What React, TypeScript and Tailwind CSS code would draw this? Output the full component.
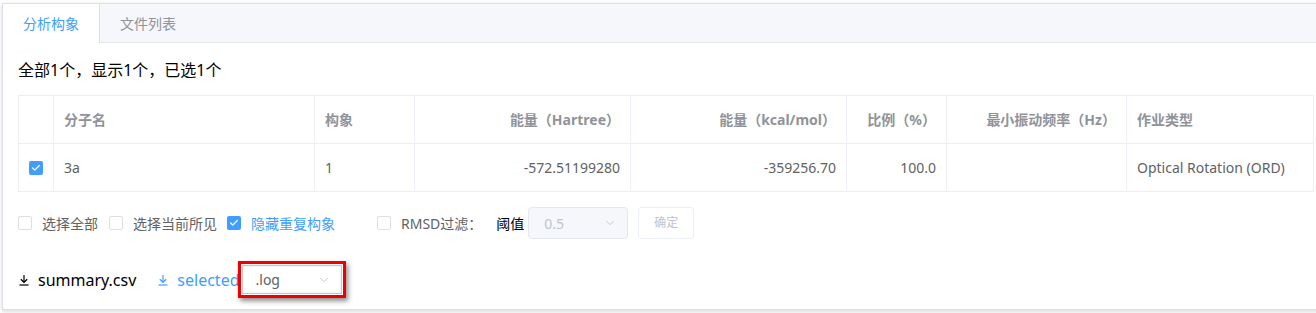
import { Check, ChevronDown } from "lucide-react"

const font = "font-['Noto_Sans','Noto_Sans_CJK_SC',sans-serif]"

function DownloadIcon({ className }: { className?: string }) {
  return (
    <svg viewBox="0 0 12 12" className={className} fill="none" stroke="currentColor" strokeWidth="1.2">
      <path d="M6 1v7" />
      <path d="M2.8 5.2L6 8.3l3.2-3.1" />
      <path d="M1.5 11h9" />
    </svg>
  )
}

function Box({ checked }: { checked?: boolean }) {
  return checked ? (
    <span className="flex h-[14px] w-[14px] items-center justify-center rounded-[2px] bg-[#409eff]">
      <Check className="h-[10px] w-[10px] text-white" strokeWidth={3} />
    </span>
  ) : (
    <span className="block h-[14px] w-[14px] rounded-[2px] border border-[#dcdfe6] bg-white" />
  )
}

const columns = [
  { title: "分子名", width: 261, align: "left" },
  { title: "构象", width: 100, align: "left" },
  { title: "能量（Hartree）", width: 216, align: "right" },
  { title: "能量（kcal/mol）", width: 216, align: "right" },
  { title: "比例（%）", width: 100, align: "right" },
  { title: "最小振动频率（Hz）", width: 180, align: "right" },
  { title: "作业类型", width: 187, align: "left" },
]

const row = ["3a", "1", "-572.51199280", "-359256.70", "100.0", "", "Optical Rotation (ORD)"]

export default function App() {
  return (
    <div className={`h-[313px] w-[1316px] overflow-hidden bg-white ${font}`}>
      <div className="ml-[2px] mt-[3px] w-[1328px] border border-[#dcdfe6] bg-white shadow-[0_2px_4px_rgba(0,0,0,0.12),0_0_6px_rgba(0,0,0,0.04)]">
        {/* Tabs */}
        <div className="flex h-[39px] border-b border-[#e4e7ed] bg-[#f5f7fa]">
          <div className="-mb-px flex h-[39px] items-center border-r border-[#dcdfe6] bg-white px-5 text-[14px] text-[#409eff]">
            分析构象
          </div>
          <div className="flex items-center px-5 text-[14px] text-[#909399]">文件列表</div>
        </div>

        <div className="px-[15px] pb-[11px] pt-[15px]">
          <div className="h-[24px] text-[16px] leading-[24px] text-black">全部1个，显示1个，已选1个</div>

          {/* Table */}
          <table className="mt-[13px] w-[1296px] table-fixed border-collapse text-[14px]">
            <colgroup>
              <col className="w-[35px]" />
              {columns.map((c) => (
                <col key={c.title} style={{ width: c.width }} />
              ))}
            </colgroup>
            <thead>
              <tr className="h-[48px]">
                <th className="border border-[#ebeef5]" />
                {columns.map((c) => (
                  <th
                    key={c.title}
                    className={`border border-[#ebeef5] px-[10px] font-bold text-[#909399] ${
                      c.align === "right" ? "text-right" : "text-left"
                    }`}
                  >
                    {c.title}
                  </th>
                ))}
              </tr>
            </thead>
            <tbody>
              <tr className="h-[48px]">
                <td className="border border-[#ebeef5] pl-[10px]">
                  <Box checked />
                </td>
                {row.map((v, i) => (
                  <td
                    key={i}
                    className={`border border-[#ebeef5] px-[10px] text-[#606266] ${
                      columns[i].align === "right" ? "text-right" : "text-left"
                    }`}
                  >
                    {v}
                  </td>
                ))}
              </tr>
            </tbody>
          </table>

          {/* Filter controls */}
          <div className="mt-[15px] flex h-[32px] items-center text-[14px] text-[#606266]">
            <Box />
            <span className="ml-[10px]">选择全部</span>
            <span className="ml-[11px]">
              <Box />
            </span>
            <span className="ml-[10px]">选择当前所见</span>
            <span className="ml-[10px]">
              <Box checked />
            </span>
            <span className="ml-[10px] text-[#409eff]">隐藏重复构象</span>
            <span className="ml-[42px]">
              <Box />
            </span>
            <span className="ml-[10px]">RMSD过滤：</span>
            <span className="ml-[14px] text-black">阈值</span>
            <div className="ml-[4px] flex h-[32px] w-[100px] items-center justify-between rounded-[4px] border border-[#e4e7ed] bg-[#f5f7fa] pl-[15px] pr-[10px] text-[#c0c4cc]">
              <span>0.5</span>
              <ChevronDown className="h-[14px] w-[14px]" strokeWidth={1.5} />
            </div>
            <button className="ml-[10px] h-[32px] w-[56px] rounded-[3px] border border-[#ebeef5] bg-white text-[12px] text-[#c0c4cc]">
              确定
            </button>
          </div>

          {/* Downloads */}
          <div className="mt-[22px] flex h-[37px] items-center text-[16px]">
            <span className="flex items-center text-black">
              <DownloadIcon className="mr-[8px] h-[12px] w-[12px]" />
              summary.csv
            </span>
            <span className="ml-[21px] flex items-center text-[#409eff]">
              <DownloadIcon className="mr-[8px] h-[12px] w-[12px]" />
              selected
            </span>
            <div className="-ml-[2px] h-[37px] w-[108px] border-[3px] border-[#ee0000] p-[1px] shadow-[2px_3px_5px_rgba(0,0,0,0.45)]">
              <div className="flex h-full items-center justify-between border border-[#c8c8c8] bg-white pl-[13px] pr-[10px] text-[14px] text-[#606266] shadow-[inset_0_0_2px_rgba(0,0,0,0.15)]">
                <span>.log</span>
                <ChevronDown className="h-[14px] w-[14px] text-[#c0c4cc]" strokeWidth={1.5} />
              </div>
            </div>
          </div>
        </div>
      </div>
    </div>
  )
}
